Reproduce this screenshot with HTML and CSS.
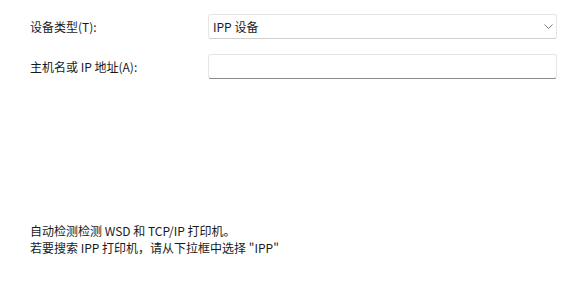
FILE: index.html
```html
<!DOCTYPE html>
<html lang="zh-CN">
<head>
<meta charset="utf-8">
<link rel="stylesheet" href="styles.css">
</head>
<body>
<div class="page">
  <div class="form">
    <div class="row row-first">
      <label class="label">设备类型(T):</label>
      <div class="combo">
        <span class="combo-text">IPP 设备</span>
        <svg class="chev" width="9" height="5" viewBox="0 0 9 5"><path d="M0.5 0.5 L4.5 4.5 L8.5 0.5" fill="none" stroke="#7a7a7a" stroke-width="1"/></svg>
      </div>
    </div>
    <div class="row">
      <label class="label">主机名或 IP 地址(A):</label>
      <div class="input"></div>
    </div>
  </div>
  <div class="note">
    <p>自动检测检测 WSD 和 TCP/IP 打印机。</p>
    <p>若要搜索 IPP 打印机，请从下拉框中选择 "IPP"</p>
  </div>
</div>
</body>
</html>
```
FILE: styles.css
```css
html, body {
  margin: 0;
  padding: 0;
  background: #ffffff;
}
.page {
  width: 577px;
  height: 296px;
  padding: 14px 20px 0 30px;
  box-sizing: border-box;
  font-family: "Noto Sans CJK SC", "Noto Sans", sans-serif;
  font-size: 12px;
  color: #1a1a1a;
  display: flex;
  flex-direction: column;
}
.form {
  display: flex;
  flex-direction: column;
  gap: 15px;
}
.row {
  display: grid;
  grid-template-columns: 178px 349px;
  align-items: center;
}
.label {
  line-height: 16px;
}
.combo, .input {
  height: 25px;
  box-sizing: border-box;
  border: 1px solid #e6e6e6;
  border-radius: 3px;
  background: #ffffff;
}
.combo {
  border-bottom-color: #cfcfcf;
  display: flex;
  align-items: center;
  justify-content: space-between;
  padding: 0 3px 0 4px;
}
.combo-text {
  line-height: 16px;
}
.chev {
  display: block;
}
.input {
  border-bottom: 1px solid #8a8a8a;
}
.note {
  margin-top: 143px;
}
.note p {
  margin: 0;
  line-height: 17px;
}
```
